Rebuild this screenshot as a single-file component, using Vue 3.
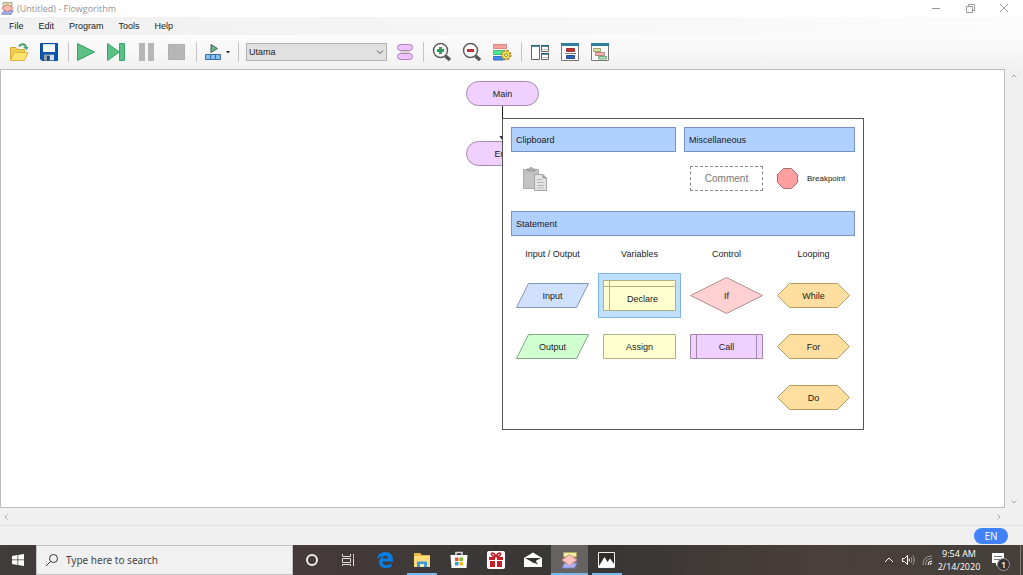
<script setup>
import { ref } from 'vue'

const menus = ['File', 'Edit', 'Program', 'Tools', 'Help']
const current = ref('Utama')
const selected = ref('Declare')

const columns = [
  { title: 'Input / Output', items: [{ name: 'Input', kind: 'slant', tone: 'blue' }, { name: 'Output', kind: 'slant', tone: 'green' }] },
  { title: 'Variables', items: [{ name: 'Declare', kind: 'declare', tone: 'yellow' }, { name: 'Assign', kind: 'box', tone: 'yellow' }] },
  { title: 'Control', items: [{ name: 'If', kind: 'diamond', tone: 'red' }, { name: 'Call', kind: 'call', tone: 'purple' }] },
  { title: 'Looping', items: [{ name: 'While', kind: 'hex', tone: 'orange' }, { name: 'For', kind: 'hex', tone: 'orange' }, { name: 'Do', kind: 'hex', tone: 'orange' }] }
]
const heights = { diamond: 37, declare: 31 }
const paths = {
  slant: 'M12.5 .5H72.5L60.5 24.5H.5Z',
  box: 'M.5 .5H72.5V24.5H.5Z',
  declare: 'M.5 .5H72.5V30.5H.5ZM6.5 .5V30.5M.5 6.5H72.5',
  diamond: 'M36.5 .5L72.5 18.5L36.5 36.5L.5 18.5Z',
  call: 'M.5 .5H72.5V24.5H.5ZM6.5 .5V24.5M66.5 .5V24.5',
  hex: 'M12.5 .5H60.5L72.5 12.5L60.5 24.5H12.5L.5 12.5Z'
}
</script>

<template>
  <div class="desktop">
    <header class="titlebar">
      <svg class="logo" viewBox="0 0 18 18">
        <path d="M3 1H15V6H3Z" fill="#f3efb0" stroke="#77775f" />
        <path d="M4 12H17L14 17H1Z" fill="#aab0f0" stroke="#666a92" />
        <path d="M9 3L17 8.500L9 14L1 8.500Z" fill="#ffb9b0" stroke="#b06a68" />
      </svg>
      <h1>(Untitled) - Flowgorithm</h1>
      <div class="winbtns">
        <button aria-label="Minimize"><svg viewBox="0 0 10 10"><path d="M1 4.500H9" /></svg></button>
        <button aria-label="Restore"><svg viewBox="0 0 10 10"><path d="M1.500 2.500H7.500V8.500H1.500ZM3.500 2.500V.5H9.500V6.500H7.500" /></svg></button>
        <button aria-label="Close"><svg viewBox="0 0 10 10"><path d="M1 0L9 8M9 0L1 8" /></svg></button>
      </div>
    </header>

    <nav class="menubar">
      <button v-for="m in menus" :key="m">{{ m }}</button>
    </nav>

    <div class="toolbar">
      <button aria-label="Open">
        <svg viewBox="0 0 20 20"><path d="M1.500 18V5.500H7L8.500 7.500H15.500V10" fill="#f0cf52" stroke="#d0a93a" /><path d="M1.500 18.500L5 10.500H19L15.500 18.500Z" fill="#ffe36c" stroke="#dcb640" /><path d="M10 4.500C12 1 16.500 1.500 17 5.500" fill="none" stroke="#3fa36b" stroke-width="2" /><path d="M14 5H19.500L17.500 8Z" fill="#3fa36b" /></svg>
      </button>
      <button aria-label="Save">
        <svg viewBox="0 0 20 20"><path d="M1.500 1.500H18.500V18.500H3L1.500 17Z" fill="#0a56b4" stroke="#0b4a99" /><path d="M4 2H16V10H4Z" fill="#fff" /><path d="M4 2H16V3.500H4Z" fill="#d8e2ee" /><path d="M5 12.500H15V18.500H5Z" fill="#9aa0a8" /><path d="M8 14H10.500V18.500H8Z" fill="#174073" /><path d="M11 13H15V18H11Z" fill="#d8dadd" /></svg>
      </button>
      <span class="sep"></span>
      <button aria-label="Run">
        <svg viewBox="0 0 20 20"><path d="M.5 1.500L17.500 10L.5 18.500Z" fill="#5ac083" stroke="#38a566" /></svg>
      </button>
      <button aria-label="Step">
        <svg viewBox="0 0 20 20"><path d="M.5 1.500L12.500 10L.5 18.500Z" fill="#5ac083" stroke="#38a566" /><path d="M12.500 1.500H17.500V18.500H12.500Z" fill="#5ac083" stroke="#38a566" /></svg>
      </button>
      <button aria-label="Pause">
        <svg viewBox="0 0 20 20"><path d="M2 1H8V19H2ZM11 1H17V19H11Z" fill="#b6b6b6" /></svg>
      </button>
      <button aria-label="Stop">
        <svg viewBox="0 0 20 20"><path d="M1.500 2.500H17.500V17.500H1.500Z" fill="#b6b6b6" stroke="#adadad" /></svg>
      </button>
      <span class="sep"></span>
      <button class="wide" aria-label="Speed">
        <svg viewBox="0 0 20 20"><path d="M8 2.500L14.500 6.500L8 10.500Z" fill="#62b98a" stroke="#4d6257" /><path d="M2.500 12.500H17.500V17.500H2.500ZM7.500 12.500V17.500M12.500 12.500V17.500" fill="#80c2f6" stroke="#416d96" /></svg>
        <svg class="caret" viewBox="0 0 6 4"><path d="M1 1H5L3 3.500Z" fill="#222" /></svg>
      </button>
      <span class="sep"></span>
      <div class="picker">
        <select v-model="current" aria-label="Function"><option>Utama</option></select>
        <svg viewBox="0 0 8 6"><path d="M1 1.500L4 4.500L7 1.500" fill="none" stroke="#555" /></svg>
      </div>
      <button class="slim" aria-label="Functions">
        <svg viewBox="0 0 20 20"><rect x="2.500" y="2.500" width="15" height="6" rx="3" fill="#edc2ff" stroke="#aa82b8" /><path d="M5 10H15" stroke="#bbb" /><rect x="2.500" y="11.500" width="15" height="6" rx="3" fill="#edc2ff" stroke="#aa82b8" /></svg>
      </button>
      <span class="sep"></span>
      <button aria-label="Zoom in">
        <svg viewBox="0 0 20 20"><path d="M13.500 14L18 18" stroke="#555" stroke-width="3.500" /><circle cx="8.500" cy="8.500" r="7" fill="#fff" stroke="#5f5f5f" stroke-width="1.500" /><path d="M8.500 5V12M5 8.500H12" stroke="#2f9d59" stroke-width="3" /></svg>
      </button>
      <button aria-label="Zoom out">
        <svg viewBox="0 0 20 20"><path d="M13.500 14L18 18" stroke="#555" stroke-width="3.500" /><circle cx="8.500" cy="8.500" r="7" fill="#fff" stroke="#5f5f5f" stroke-width="1.500" /><path d="M5 8.500H12" stroke="#bd3239" stroke-width="3" /></svg>
      </button>
      <button aria-label="Style">
        <svg viewBox="0 0 20 20"><path d="M1.500 2.500H14.500V6.500H1.500Z" fill="#f5a09b" stroke="#d98a86" /><path d="M1.500 8.500H11.500V12.500H1.500Z" fill="#4eea92" stroke="#45ba78" /><path d="M1.500 14.500H11.500V18H1.500Z" fill="#3e8bea" stroke="#326fbd" /><circle cx="14" cy="13" r="4.500" fill="#f5df4d" stroke="#a48b2c" stroke-width="2" stroke-dasharray="2 1.530" /><circle cx="14" cy="13" r="4" fill="#f8e45d" stroke="#bca83a" /><circle cx="14" cy="13" r="1.500" fill="#fff" stroke="#9b882d" /></svg>
      </button>
      <span class="sep"></span>
      <button aria-label="Layout">
        <svg viewBox="0 0 20 20" fill="#fff" stroke="#666"><path d="M1.500 3.500H9.500V17.500H1.500ZM11.500 3.500H18.500V9.500H11.500ZM11.500 11.500H18.500V17.500H11.500Z" /><path d="M2 4.500H9M12 4.500H18M12 12.500H18" stroke="#3d93b5" /><path d="M1 3.500H10M11 3.500H19M11 11.500H19" stroke="#3c5f70" /><path d="M12 7.500H18M12 15.500H18" stroke="#bbb" /></svg>
      </button>
      <button aria-label="Console">
        <svg viewBox="0 0 20 20"><path d="M1.500 1.500H18.500V18.500H1.500Z" fill="#fff" stroke="#777" /><path d="M1 2.500H19" stroke="#2f7f9f" stroke-width="3" /><path d="M6.500 6.500H14.500V9.500H6.500Z" fill="#d12930" stroke="#8f3436" /><path d="M5 11.500H16" stroke="#777" /><path d="M6.500 13.500H14.500V16.500H6.500Z" fill="#2d63cd" stroke="#294878" /></svg>
      </button>
      <button aria-label="Source code">
        <svg viewBox="0 0 20 20"><path d="M1.500 1.500H18.500V18.500H1.500Z" fill="#fff" stroke="#777" /><path d="M1 2.500H19" stroke="#2f7f9f" stroke-width="3" /><path d="M3.500 6.500H10.500V9.500H3.500Z" fill="#dfe5a3" stroke="#9da177" /><path d="M5.500 10.500H14.500V13.500H5.500Z" fill="#f5b0b0" stroke="#b98183" /><path d="M8.500 14.500H16.500V17H8.500Z" fill="#a8e7b0" stroke="#7ba883" /></svg>
      </button>
    </div>

    <main class="work">
      <section class="canvas">
        <svg class="link" viewBox="0 0 9 35"><path d="M4.500 0V34" stroke="#222" /><path d="M1.500 30L4.500 34.500L7.500 30Z" fill="#222" /></svg>
        <div class="node main">Main</div>
        <div class="node end">End</div>

        <div class="popup">
          <div class="top">
            <section>
              <h2>Clipboard</h2>
              <div class="tools">
                <button class="paste" aria-label="Paste">
                  <svg viewBox="0 0 26 26"><path d="M1.500 3.500H16.500V22.500H1.500Z" fill="#c3c3c3" stroke="#adadad" /><path d="M5 5V3H7.500L9 1L10.500 3H13V5Z" fill="#aaa" stroke="#999" /><path d="M12.500 8.500H21L24.500 12V24.500H12.500Z" fill="#e4e4e4" stroke="#a5a5a5" /><path d="M21 8.500V12H24.500" fill="#aaa" stroke="#999" /><path d="M15 13.500H20M15 16.500H22M15 19.500H22M15 22H22" stroke="#b9b9b9" /></svg>
                </button>
              </div>
            </section>
            <section>
              <h2>Miscellaneous</h2>
              <div class="tools misc">
                <button class="comment">Comment</button>
                <button class="break">
                  <svg viewBox="0 0 21 21"><path d="M6.500 .5H14.500L20.500 6.500V14.500L14.500 20.500H6.500L.5 14.500V6.500Z" fill="#ff9f9f" stroke="#a97070" /></svg>
                  Breakpoint
                </button>
              </div>
            </section>
          </div>
          <h2>Statement</h2>
          <div class="columns">
            <section v-for="c in columns" :key="c.title">
              <h3>{{ c.title }}</h3>
              <div v-for="i in c.items" :key="i.name" class="slot">
                <button class="shape" :class="[i.tone, i.kind, { on: selected === i.name }]" @click="selected = i.name">
                  <svg width="73" :height="heights[i.kind] || 25"><path :d="paths[i.kind]" /></svg>
                  <span>{{ i.name }}</span>
                </button>
              </div>
            </section>
          </div>
        </div>
      </section>
      <div class="vscroll">
        <svg viewBox="0 0 8 6"><path d="M1.500 4.500L4 2L6.500 4.500" /></svg>
        <svg viewBox="0 0 8 6"><path d="M1.500 1.500L4 4L6.500 1.500" /></svg>
      </div>
    </main>
    <div class="hscroll">
      <svg viewBox="0 0 6 8"><path d="M4.500 1.500L2 4L4.500 6.500" /></svg>
      <svg viewBox="0 0 6 8"><path d="M1.500 1.500L4 4L1.500 6.500" /></svg>
    </div>
    <div class="status"><button class="lang">EN</button></div>

    <footer class="taskbar">
      <button class="start" aria-label="Start">
        <svg viewBox="0 0 12 12"><path d="M0 2L5.500 1V5.500H0ZM6.200 1L12 0V5.500H6.200ZM0 6.200H5.500V11L0 10ZM6.200 6.200H12V12L6.200 11Z" fill="#fff" /></svg>
      </button>
      <label class="search">
        <svg viewBox="0 0 14 14"><circle cx="8.500" cy="5.500" r="4" /><path d="M5.500 8.500L1 13" /></svg>
        <input type="text" placeholder="Type here to search" aria-label="Type here to search" />
      </label>
      <div class="apps">
        <button aria-label="Cortana"><svg viewBox="0 0 20 20"><circle cx="10" cy="10" r="5" fill="none" stroke="#eee" stroke-width="2" /></svg></button>
        <button class="view" aria-label="Task view"><svg viewBox="0 0 20 20" fill="none" stroke="#ddd"><path d="M4.500 4V6.500H12.500V4M4.500 8.500H12.500V12.500H4.500ZM4.500 16V14.500H12.500V16M15.500 4V6M15.500 9V16" /><path d="M15 7.500H16" stroke-width="2" /></svg></button>
        <button aria-label="Edge"><svg viewBox="0 0 20 20"><path d="M2 9C3 4 6 2 10.500 2C15.500 2 18 5.500 18 10V11.500H7.500C7.500 16 12.500 16 16.500 13.500V17C11 19.500 4 18 4 12C4 9.500 5.500 7.500 8 6.500C5.500 6.500 3.500 7.500 2 9ZM7.700 8.500H13C13 4.500 8 5 7.700 8.500Z" fill="#0b7de0" fill-rule="evenodd" /></svg></button>
        <button class="open" aria-label="File Explorer"><svg viewBox="0 0 20 20"><path d="M2 3H8L10 5H18V17H2Z" fill="#e8b84b" /><path d="M2 6H18V17H2Z" fill="#ffdc77" /><path d="M5 17V11.500H15V17H12V14H8V17Z" fill="#3b9be3" /><path d="M8 14H12V17H8Z" fill="#ffe8a0" /></svg></button>
        <button aria-label="Store"><svg viewBox="0 0 20 20"><path d="M7 5V2.500H13V5" fill="none" stroke="#ddd" stroke-width="1.500" /><path d="M1.500 5H18.500L17.500 18H2.500Z" fill="#fff" /><path d="M6 7.500H9.500V11H6Z" fill="#ef4e2e" /><path d="M10.500 7.500H14V11H10.500Z" fill="#79b828" /><path d="M6 12H9.500V15.500H6Z" fill="#2ba0e7" /><path d="M10.500 12H14V15.500H10.500Z" fill="#f6b61b" /></svg></button>
        <button aria-label="Gifts"><svg viewBox="0 0 20 20"><rect x="1" y="1" width="18" height="18" rx="2" fill="#fff" /><path d="M3 7H9V10H3ZM11 7H17V10H11ZM4 11H9V17H4ZM11 11H16V17H11Z" fill="#c41f28" /><path d="M10 6.500C6 7 4 3 6.500 3C8.500 3 10 6.500 10 6.500C10 6.500 11.500 3 13.500 3C16 3 14 7 10 6.500Z" fill="none" stroke="#c41f28" stroke-width="1.500" /></svg></button>
        <button aria-label="Mail"><svg viewBox="0 0 20 20"><path d="M1 8L10 2.500L19 8V17H1Z" fill="#fff" /><path d="M2 8H18L10 12.500Z" fill="#353231" /><path d="M9 12L15 14.500L12 10Z" fill="#353231" /></svg></button>
        <button class="open active" aria-label="Flowgorithm"><svg viewBox="0 0 20 20"><path d="M3.500 2.500H16.500V7H3.500Z" fill="#f3efa0" stroke="#aaa66a" /><path d="M4.500 13H17L14.500 18H2Z" fill="#adb3fb" stroke="#7d82b6" /><path d="M9.500 4.500L17 10L9.500 15.500L2 10Z" fill="#ffc1b9" stroke="#cb8e88" /></svg></button>
        <button class="open" aria-label="Photos"><svg viewBox="0 0 20 20"><path d="M1.500 2.500H17.500V17.500H1.500Z" fill="#302e2d" stroke="#eee" /><path d="M2 16L7.500 7L10.500 12L13 8.500L17 14V17H2Z" fill="#fff" /></svg></button>
      </div>
      <div class="tray">
        <button aria-label="Hidden icons"><svg viewBox="0 0 16 16"><path d="M4 10L8 6L12 10" /></svg></button>
        <button aria-label="Volume"><svg viewBox="0 0 16 16"><path d="M2.500 6.500H4.500L7.500 3.500V12.500L4.500 9.500H2.500ZM9 6.500Q10 8 9 9.500" /><path d="M11 5Q13 8 11 11M13 3.500Q16 8 13 12.500" stroke="#999" /></svg></button>
        <button aria-label="Network"><svg viewBox="0 0 16 16"><path d="M4 13Q4 4 13 4M6.500 13Q6.500 6.500 13 6.500" stroke="#999" /><path d="M9 13Q9 9 13 9M11 13Q11 11 13 11" /></svg></button>
        <time>9:54 AM<br />2/14/2020</time>
        <button class="notes" aria-label="Notifications">
          <svg viewBox="0 0 22 22"><path d="M2 4H14V14H9L6 17V14H2Z" fill="#fff" stroke="none" /><path d="M4 7.500H12M4 10.500H10" stroke="#777" /></svg>
          <span class="badge">1</span>
        </button>
      </div>
    </footer>
  </div>
</template>

<style>
body { margin: 0; }
</style>

<style scoped>
.desktop { height: 100vh; min-height: 540px; display: flex; flex-direction: column; overflow: hidden; background: #f0f0f0; color: #1a1a1a; font: 9px/12px "Liberation Sans", Arial, sans-serif; }
.desktop * { box-sizing: border-box; }
button { font: inherit; color: inherit; border: 0; padding: 0; margin: 0; background: none; }
svg { display: block; flex: none; }
h1, h2, h3 { margin: 0; font: inherit; }

.titlebar { flex: none; height: 17px; display: flex; align-items: center; background: #fff; color: #929292; font: 9px/16px "Open Sans", "Noto Sans", sans-serif; }
.logo { width: 13px; height: 13px; margin: 0 3px 0 1px; }
.winbtns { margin-left: auto; display: flex; }
.winbtns button { width: 34px; height: 17px; display: grid; place-items: center; }
.winbtns button:last-child { margin-right: 2px; }
.winbtns svg { width: 10px; height: 10px; fill: none; stroke: #999; }

.menubar { flex: none; height: 18px; display: flex; align-items: center; gap: 15px; padding-left: 9px; background: linear-gradient(90deg, #f0f0f0, #fcfcfc); }

.toolbar { flex: none; height: 34px; display: flex; align-items: center; padding-left: 4px; background: linear-gradient(#fcfcfc, #f1f1f1); }
.toolbar button { width: 30px; height: 30px; display: flex; align-items: center; justify-content: center; }
.toolbar svg { width: 20px; height: 20px; }
.toolbar .wide { width: 34px; gap: 2px; }
.toolbar .slim { width: 28px; }
.toolbar .caret { width: 6px; height: 4px; }
.sep { width: 8px; height: 20px; background: linear-gradient(#c4c4c4, #c4c4c4) center / 1px 100% no-repeat; }
.picker { width: 141px; margin: 0 4px; display: grid; align-items: center; }
.picker > * { grid-area: 1 / 1; }
.picker select { appearance: none; width: 100%; height: 18px; padding: 0 2px; border: 1px solid #b0b0b0; border-radius: 0; background: #e1e1e1; color: #222; font: inherit; }
.picker .picker svg, .picker svg { width: 8px; height: 6px; justify-self: end; margin-right: 3px; pointer-events: none; }

.work { flex: 1; min-height: 0; display: flex; }
.canvas { flex: 1; position: relative; background: #fff; border: 1px solid #bdbdbd; overflow: hidden; }
.vscroll { width: 18px; display: flex; flex-direction: column; align-items: center; justify-content: space-between; padding: 4px 0 3px; }
.hscroll { flex: none; height: 18px; display: flex; align-items: center; justify-content: space-between; padding: 0 21px 0 3px; border-bottom: 1px solid #e2e2e2; }
.vscroll svg { width: 8px; height: 6px; }
.hscroll svg { width: 6px; height: 8px; }
.vscroll svg, .hscroll svg { fill: none; stroke: #a8a8a8; }
.status { flex: none; height: 19px; display: flex; align-items: center; justify-content: flex-end; padding-right: 15px; }
.lang { width: 34px; height: 16px; border-radius: 8px; background: #3f82fb; color: #fff; font: 10px/14px "Open Sans", sans-serif; }

.node { position: absolute; left: 465px; width: 73px; height: 25px; border: 1px solid #a48bb0; border-radius: 13px; background: #efd0ff; line-height: 24px; text-align: center; }
.main { top: 11px; }
.end { top: 71px; }
.link { position: absolute; left: 497px; top: 36px; width: 9px; height: 35px; }

.popup { position: absolute; left: 501px; top: 48px; width: 362px; padding: 8px 8px 6px; background: #fff; border: 1px solid #555; }
.popup h2 { height: 25px; padding: 0 4px; border: 1px solid #7891c4; background: #b0d0ff; line-height: 24px; }
.top { display: grid; grid-template-columns: 165fr 171fr; gap: 8px; }
.tools { height: 59px; display: flex; align-items: center; padding: 0 0 6px 11px; }
.misc { padding-left: 6px; gap: 14px; }
.paste svg { width: 26px; height: 26px; }
.comment { width: 73px; height: 25px; border: 1px dashed #888; color: #777; font-size: 10px; }
.break { display: flex; align-items: center; gap: 9px; font-size: 8px; }
.break svg { width: 21px; height: 21px; }
.columns { display: grid; grid-template-columns: repeat(4, 1fr); margin: 0 -2px; }
.columns h3 { height: 34px; line-height: 36px; text-align: center; white-space: nowrap; }
.slot { height: 51px; display: grid; place-items: center; }
.shape { display: grid; place-items: center; border: 1px solid transparent; }
.shape > * { grid-area: 1 / 1; }
.shape path { fill: var(--fill); stroke: var(--line); }
.declare { padding: 6px 4px; }
.declare span { padding: 6px 0 0 6px; }
.on { border-color: #7fb5ea; background: #bfdfff; }
.blue { --fill: #d0e0ff; --line: #8495b8; }
.green { --fill: #d0ffd0; --line: #82ad82; }
.yellow { --fill: #ffffd0; --line: #b0b080; }
.red { --fill: #ffd0d0; --line: #b98d8d; }
.purple { --fill: #efd0ff; --line: #a287b0; }
.orange { --fill: #ffdfa0; --line: #b89a60; }

.taskbar { flex: none; height: 30px; display: flex; background: linear-gradient(90deg, #403c3b 0, #46393a 30%, #3b3938 46%, #383635 60%, #4a3f3a 80%, #45403a); color: #fff; }
.start { width: 36px; display: grid; place-items: center; }
.start svg { width: 12px; height: 12px; }
.search { width: 257px; display: flex; align-items: center; gap: 7px; padding-left: 8px; background: #f1f1f1; border: 1px solid #c2c2c2; }
.search svg { width: 14px; height: 14px; fill: none; stroke: #333; stroke-width: 1; }
.search input { flex: 1; min-width: 0; border: 0; padding: 0; background: none; outline: 0; font: 10px/16px "Noto Sans", "Open Sans", sans-serif; }
.search input::placeholder { color: #444; opacity: 1; }
.apps { display: flex; }
.apps button { width: 37px; display: grid; place-items: center; }
.apps .view { width: 36px; }
.apps svg { width: 20px; height: 20px; }
.apps .open { background: linear-gradient(#76b9ed, #76b9ed) center bottom / 30px 2px no-repeat; }
.apps .active { background: linear-gradient(#76b9ed, #76b9ed) center bottom / 100% 2px no-repeat #676363; }
.tray { margin-left: auto; display: flex; align-items: center; padding-right: 2px; }
.tray > button { width: 19px; display: grid; place-items: center; }
.tray svg { width: 16px; height: 16px; fill: none; stroke: #fff; }
.tray time { width: 46px; text-align: center; white-space: nowrap; font: 9px/13px "Open Sans", "Noto Sans", sans-serif; }
.tray .notes { position: relative; width: 39px; height: 30px; border-right: 1px solid #807a76; }
.tray .notes svg { width: 22px; height: 22px; }
.badge { position: absolute; left: 15px; top: 13px; width: 13px; height: 13px; border: 1px solid #999; border-radius: 50%; background: #343130; font: 600 9px/11px "Open Sans", sans-serif; }
</style>
